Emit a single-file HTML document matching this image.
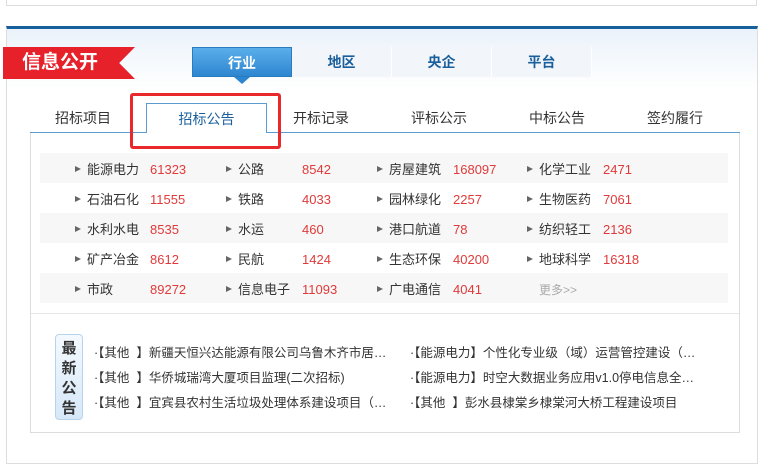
<!DOCTYPE html>
<html><head><meta charset="utf-8"><style>
*{margin:0;padding:0;box-sizing:border-box}
body{width:762px;height:475px;background:#fff;font-family:"Liberation Sans","Noto Sans CJK SC",sans-serif;position:relative;overflow:hidden;color:#333}
.a{position:absolute}
.topbox{left:6px;top:-2px;width:751px;height:8px;border:1px solid #ddd;border-top:none}
.sec{left:6px;top:26px;width:752px;height:438px;border:1px solid #ddd;border-top:3px solid #16609e;background:linear-gradient(#eaf2fa,#fff 60px)}
.ban{left:3px;top:47px;width:132px;height:32px;background:#e62129;clip-path:polygon(0 0,100% 0,88% 50%,100% 100%,0 100%);color:#fff;font-weight:bold;font-size:19px;line-height:32px;padding-left:19px;letter-spacing:0}
.t1{top:47px;height:30px;width:100px;text-align:center;line-height:30px;font-size:14px;font-weight:bold;color:#1a5f9c;background:#f2f6fa;border-right:1px solid #fff}
.t1.on{background:linear-gradient(#5aaeea,#2e86d0);color:#fff;border:1px solid #2a7cc0}
.arr{left:234px;top:77px;width:0;height:0;border:8px solid transparent;border-top:7px solid #2e86d0}
.t2{top:103px;height:30px;width:118px;text-align:center;line-height:30px;font-size:14px;color:#333}
.t2.on{background:#fff;border:1px solid #5a9cd0;border-bottom:none;color:#1a5f9c;height:31px;width:121px}
.line2{left:30px;top:132px;width:710px;height:1px;background:#5a9cd0}
.panel{left:30px;top:133px;width:710px;height:300px;border:1px solid #ddd;border-top:none;background:#fff}
.row{left:40px;width:688px;height:30px}
.g{background:#f7f7f7}
.c{position:absolute;top:2px;line-height:30px;font-size:13px}
.tri{position:absolute;top:13px;width:0;height:0;border-left:6px solid #666;border-top:3.5px solid transparent;border-bottom:3.5px solid transparent}
.n{color:#e03a3a;font-size:13px}
.sep{left:31px;top:313px;width:708px;height:1px;background:#e6e6e6}
.badge{left:55px;top:334px;width:28px;height:86px;border:1px solid #b8d4ec;border-radius:4px;background:linear-gradient(#f4f9fe,#d6e8f8);font-size:15px;font-weight:bold;color:#333;text-align:center;line-height:20px;padding-top:4px}
.nt{font-size:12.5px;line-height:16px;white-space:nowrap;color:#333}
.red{left:130px;top:93px;width:151px;height:56px;border:3px solid #e8282b;border-radius:3px}
</style></head><body>
<div class="a topbox"></div>
<div class="a sec"></div>
<div class="a ban">信息公开</div>
<div class="a t1 on" style="left:192px">行业</div>
<div class="a arr"></div>
<div class="a t1" style="left:292px">地区</div>
<div class="a t1" style="left:392px">央企</div>
<div class="a t1" style="left:492px">平台</div>
<div class="a line2"></div>
<div class="a t2" style="left:24px">招标项目</div>
<div class="a t2 on" style="left:146px">招标公告</div>
<div class="a t2" style="left:262px">开标记录</div>
<div class="a t2" style="left:380px">评标公示</div>
<div class="a t2" style="left:498px">中标公告</div>
<div class="a t2" style="left:616px">签约履行</div>
<div class="a panel"></div>
<div class="a row g" style="top:153px"><span class="tri" style="left:35px"></span><span class="c" style="left:47px">能源电力</span><span class="c n" style="left:110px">61323</span><span class="tri" style="left:186px"></span><span class="c" style="left:198px">公路</span><span class="c n" style="left:262px">8542</span><span class="tri" style="left:337px"></span><span class="c" style="left:349px">房屋建筑</span><span class="c n" style="left:413px">168097</span><span class="tri" style="left:487px"></span><span class="c" style="left:499px">化学工业</span><span class="c n" style="left:563px">2471</span></div>
<div class="a row" style="top:183px"><span class="tri" style="left:35px"></span><span class="c" style="left:47px">石油石化</span><span class="c n" style="left:110px">11555</span><span class="tri" style="left:186px"></span><span class="c" style="left:198px">铁路</span><span class="c n" style="left:262px">4033</span><span class="tri" style="left:337px"></span><span class="c" style="left:349px">园林绿化</span><span class="c n" style="left:413px">2257</span><span class="tri" style="left:487px"></span><span class="c" style="left:499px">生物医药</span><span class="c n" style="left:563px">7061</span></div>
<div class="a row g" style="top:213px"><span class="tri" style="left:35px"></span><span class="c" style="left:47px">水利水电</span><span class="c n" style="left:110px">8535</span><span class="tri" style="left:186px"></span><span class="c" style="left:198px">水运</span><span class="c n" style="left:262px">460</span><span class="tri" style="left:337px"></span><span class="c" style="left:349px">港口航道</span><span class="c n" style="left:413px">78</span><span class="tri" style="left:487px"></span><span class="c" style="left:499px">纺织轻工</span><span class="c n" style="left:563px">2136</span></div>
<div class="a row" style="top:243px"><span class="tri" style="left:35px"></span><span class="c" style="left:47px">矿产冶金</span><span class="c n" style="left:110px">8612</span><span class="tri" style="left:186px"></span><span class="c" style="left:198px">民航</span><span class="c n" style="left:262px">1424</span><span class="tri" style="left:337px"></span><span class="c" style="left:349px">生态环保</span><span class="c n" style="left:413px">40200</span><span class="tri" style="left:487px"></span><span class="c" style="left:499px">地球科学</span><span class="c n" style="left:563px">16318</span></div>
<div class="a row g" style="top:273px"><span class="tri" style="left:35px"></span><span class="c" style="left:47px">市政</span><span class="c n" style="left:110px">89272</span><span class="tri" style="left:186px"></span><span class="c" style="left:198px">信息电子</span><span class="c n" style="left:262px">11093</span><span class="tri" style="left:337px"></span><span class="c" style="left:349px">广电通信</span><span class="c n" style="left:413px">4041</span><span class="c" style="left:499px;color:#aaa;font-size:12px">更多&gt;&gt;</span></div>
<div class="a sep"></div>
<div class="a badge">最<br>新<br>公<br>告</div>
<div class="a nt" style="left:94px;top:345px">·【其他&nbsp; 】新疆天恒兴达能源有限公司乌鲁木齐市居…</div>
<div class="a nt" style="left:94px;top:370px">·【其他&nbsp; 】华侨城瑞湾大厦项目监理(二次招标)</div>
<div class="a nt" style="left:94px;top:395px">·【其他&nbsp; 】宜宾县农村生活垃圾处理体系建设项目（…</div>
<div class="a nt" style="left:410px;top:345px">·【能源电力】个性化专业级（域）运营管控建设（…</div>
<div class="a nt" style="left:410px;top:370px">·【能源电力】时空大数据业务应用v1.0停电信息全…</div>
<div class="a nt" style="left:410px;top:395px">·【其他&nbsp; 】彭水县棣棠乡棣棠河大桥工程建设项目</div>
<div class="a red"></div>
</body></html>
